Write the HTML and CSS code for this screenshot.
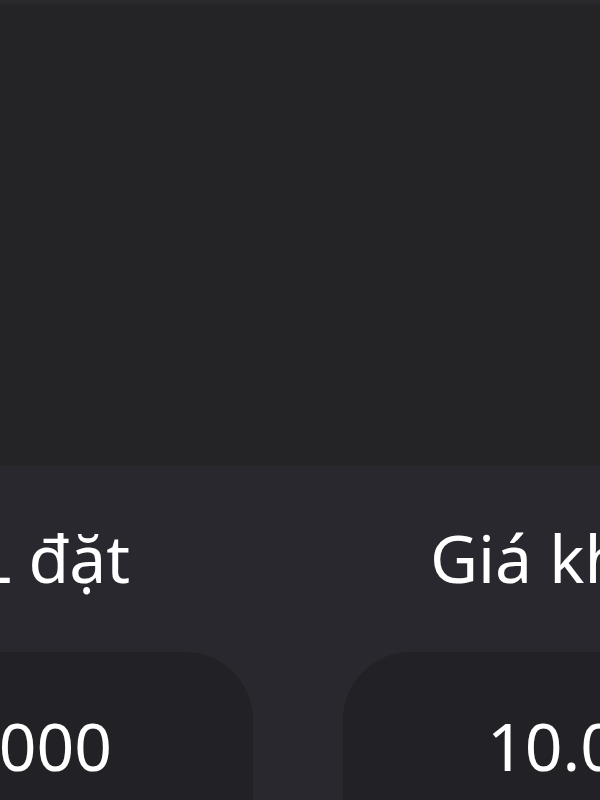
FILE: index.html
```html
<!DOCTYPE html>
<html lang="vi">
<head>
<meta charset="UTF-8">
<meta name="viewport" content="width=device-width, initial-scale=1.0">
<title>Đặt lệnh</title>
<link rel="stylesheet" href="styles.css">
</head>
<body>
    <div class="chart"></div>
    <div class="panel">
        <div class="form-row">
            <div class="campo campo-left">
                <label class="nhan">SL đặt</label>
                <div class="o-nhap">1.000</div>
            </div>
            <div class="campo campo-right">
                <label class="nhan">Giá khớp</label>
                <div class="o-nhap">10.000</div>
            </div>
        </div>
    </div>
</body>
</html>
```

FILE: styles.css
```css
body {
    font-family: "Noto Sans", "Open Sans", sans-serif;
    margin: 0;
    padding: 0;
    background-color: #29282e;
    color: #fff;
    overflow: hidden;
    height: 800px;
}

.chart {
    height: 466px;
    background: linear-gradient(#2b2b2f, #242427 6px);
}

.panel {
    background-color: #29282e;
    padding-top: 58px;
    overflow: hidden;
}

.form-row {
    display: grid;
    grid-template-columns: 420px 420px;
    column-gap: 90px;
    margin-left: -167px;
}

.campo {
    display: flex;
    flex-direction: column;
}

.nhan {
    display: block;
    font-size: 66px;
    line-height: 1;
    white-space: nowrap;
}

.o-nhap {
    margin-top: 62px;
    height: 220px;
    padding-top: 60px;
    box-sizing: border-box;
    background-color: #222126;
    border-radius: 68px;
    font-size: 66px;
    line-height: 1;
    white-space: nowrap;
}

.campo-left .nhan,
.campo-left .o-nhap {
    text-align: right;
}

.campo-left .nhan {
    padding-right: 123px;
}

.campo-left .o-nhap {
    padding-right: 141px;
}

.campo-right .nhan {
    padding-left: 87px;
}

.campo-right .o-nhap {
    padding-left: 144px;
}
```
